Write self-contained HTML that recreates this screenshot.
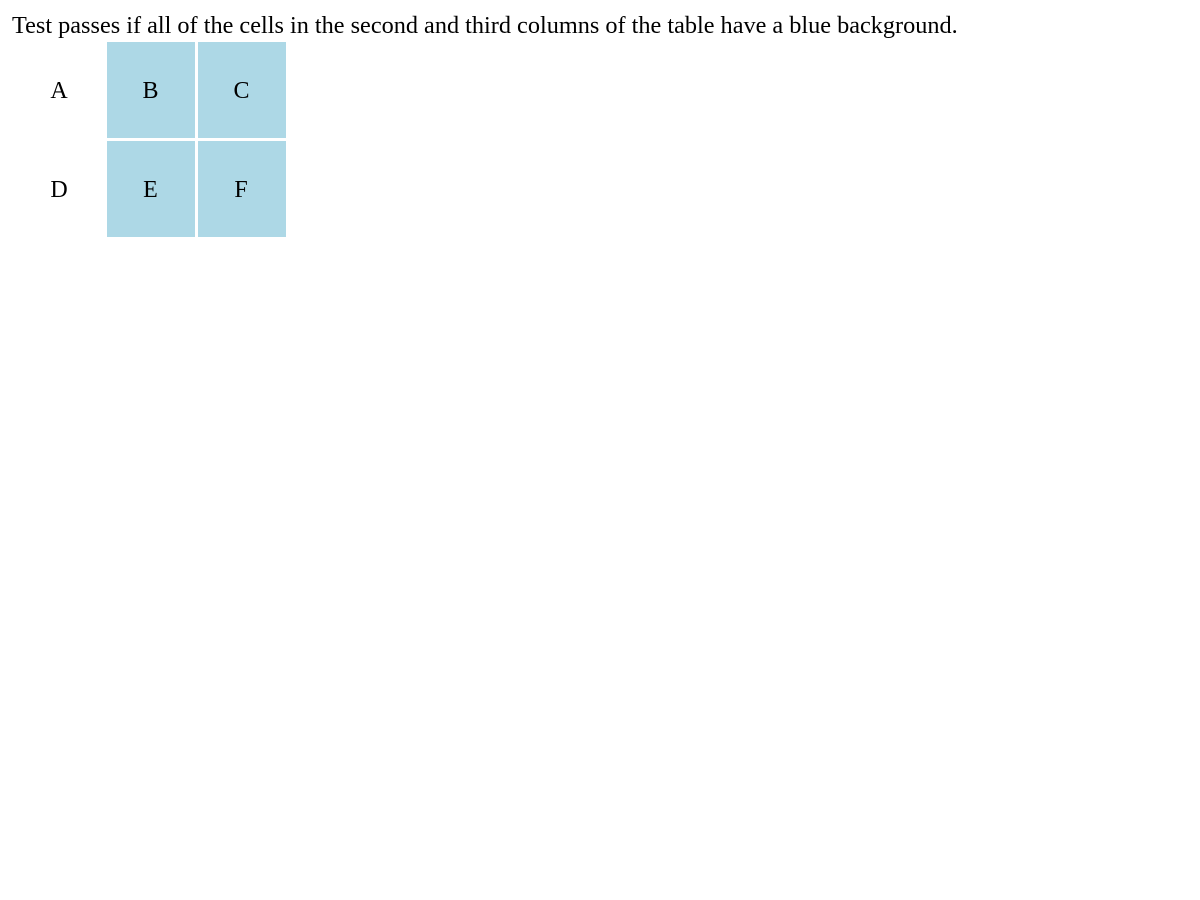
<!DOCTYPE html>
<html><head><meta charset="utf-8"><style>
html,body{margin:0;padding:0;background:#fff;width:1200px;height:900px;overflow:hidden;}
body{font-family:"Liberation Serif",serif;font-size:24px;color:#000;position:relative;}
.t{position:absolute;left:12px;top:11px;line-height:30px;white-space:nowrap;font-size:24.28px;}
.c{position:absolute;width:88px;height:96px;line-height:98px;text-align:center;}
.b{background:#add8e6;}
</style></head><body>
<div class="t">Test passes if all of the cells in the second and third columns of the table have a blue background.</div>
<div class="c" style="left:15px;top:42px">A</div>
<div class="c b" style="left:107px;top:42px;text-indent:-1px">B</div>
<div class="c b" style="left:198px;top:42px;text-indent:-1px">C</div>
<div class="c" style="left:15px;top:141px">D</div>
<div class="c b" style="left:107px;top:141px;text-indent:-1px">E</div>
<div class="c b" style="left:198px;top:141px;text-indent:-2px">F</div>
</body></html>
